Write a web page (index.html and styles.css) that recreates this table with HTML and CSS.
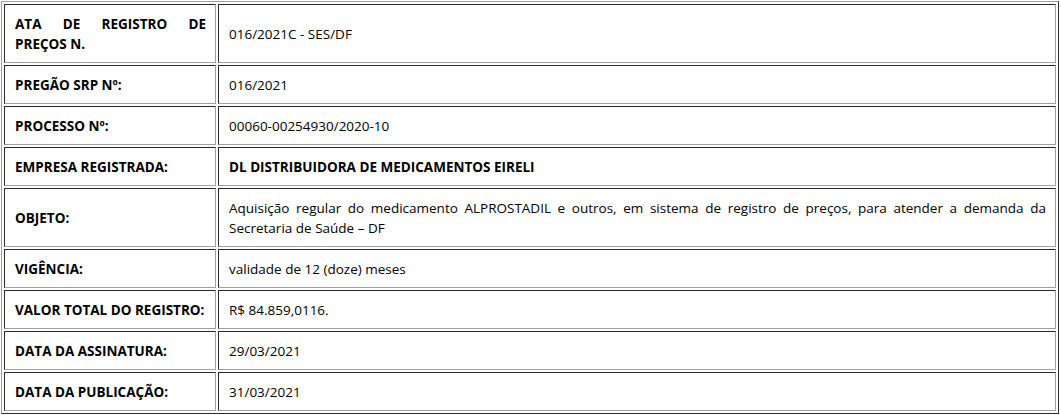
FILE: index.html
```html
<!DOCTYPE html>
<html lang="pt-BR">
<head>
<meta charset="utf-8">
<title>Ata de Registro de Preços</title>
<link rel="stylesheet" href="styles.css">
</head>
<body>
<table class="ata">
  <tbody>
    <tr>
      <td class="label"><strong>ATA DE REGISTRO DE PREÇOS N.</strong></td>
      <td class="value">016/2021C - SES/DF</td>
    </tr>
    <tr>
      <td class="label"><strong>PREGÃO SRP Nº:</strong></td>
      <td class="value">016/2021</td>
    </tr>
    <tr>
      <td class="label"><strong>PROCESSO Nº:</strong></td>
      <td class="value">00060-00254930/2020-10</td>
    </tr>
    <tr>
      <td class="label"><strong>EMPRESA REGISTRADA:</strong></td>
      <td class="value"><strong>DL DISTRIBUIDORA DE MEDICAMENTOS EIRELI</strong></td>
    </tr>
    <tr>
      <td class="label"><strong>OBJETO:</strong></td>
      <td class="value">Aquisição regular do medicamento ALPROSTADIL e outros, em sistema de registro de preços, para atender a demanda da Secretaria de Saúde – DF</td>
    </tr>
    <tr>
      <td class="label"><strong>VIGÊNCIA:</strong></td>
      <td class="value">validade de 12 (doze) meses</td>
    </tr>
    <tr>
      <td class="label"><strong>VALOR TOTAL DO REGISTRO:</strong></td>
      <td class="value">R$ 84.859,0116.</td>
    </tr>
    <tr>
      <td class="label"><strong>DATA DA ASSINATURA:</strong></td>
      <td class="value">29/03/2021</td>
    </tr>
    <tr>
      <td class="label"><strong>DATA DA PUBLICAÇÃO:</strong></td>
      <td class="value">31/03/2021</td>
    </tr>
  </tbody>
</table>
</body>
</html>
```

FILE: styles.css
```css
html, body {
  margin: 0;
  padding: 0;
  background: #ffffff;
}

body {
  padding: 1px;
  font-family: "Open Sans", "Noto Sans", sans-serif;
  font-size: 13.5px;
  line-height: 20px;
  color: #000000;
}

.ata {
  width: 1058px;
  border-collapse: separate;
  border-spacing: 2px;
  border: 1px solid;
  border-color: #a0a0a0 #2b2b2b #2b2b2b #a0a0a0;
}

.ata td {
  border: 1px solid;
  border-color: #2b2b2b #a0a0a0 #a0a0a0 #2b2b2b;
  padding: 9px 9px 8px 10px;
  text-align: justify;
  vertical-align: middle;
}

.ata td.label {
  width: 191px;
}

.ata strong {
  font-weight: 700;
}
```
